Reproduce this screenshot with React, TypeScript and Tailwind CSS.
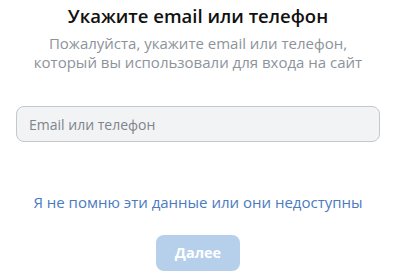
export default function App() {
  return (
    <div
      className="flex w-[396px] flex-col items-center bg-white pt-[3px]"
      style={{ fontFamily: '"Open Sans", "Noto Sans", sans-serif' }}
    >
      <h1 className="text-[18.5px] font-semibold leading-[26px] text-[#111111]">
        Укажите email или телефон
      </h1>
      <p className="mt-[5px] text-center text-[15px] leading-[19px] text-[#8d939b]">
        Пожалуйста, укажите email или телефон,
        <br />
        который вы использовали для входа на сайт
      </p>
      <div className="mt-[34px] w-full px-4">
        <input
          type="text"
          placeholder="Email или телефон"
          className="h-[36px] w-full rounded-[8px] border border-[#c4c7cc] bg-[#f2f3f5] px-3 text-[14px] text-[#222] outline-none placeholder:text-[#7e848c]"
        />
      </div>
      <a className="mt-[50px] text-[15px] leading-[20px] text-[#4a7bc0]">
        Я не помню эти данные или они недоступны
      </a>
      <button className="mt-[23px] h-[36px] w-[84px] rounded-[8px] bg-[#b6cfeb] text-[14.5px] font-bold text-white">
        Далее
      </button>
    </div>
  );
}
